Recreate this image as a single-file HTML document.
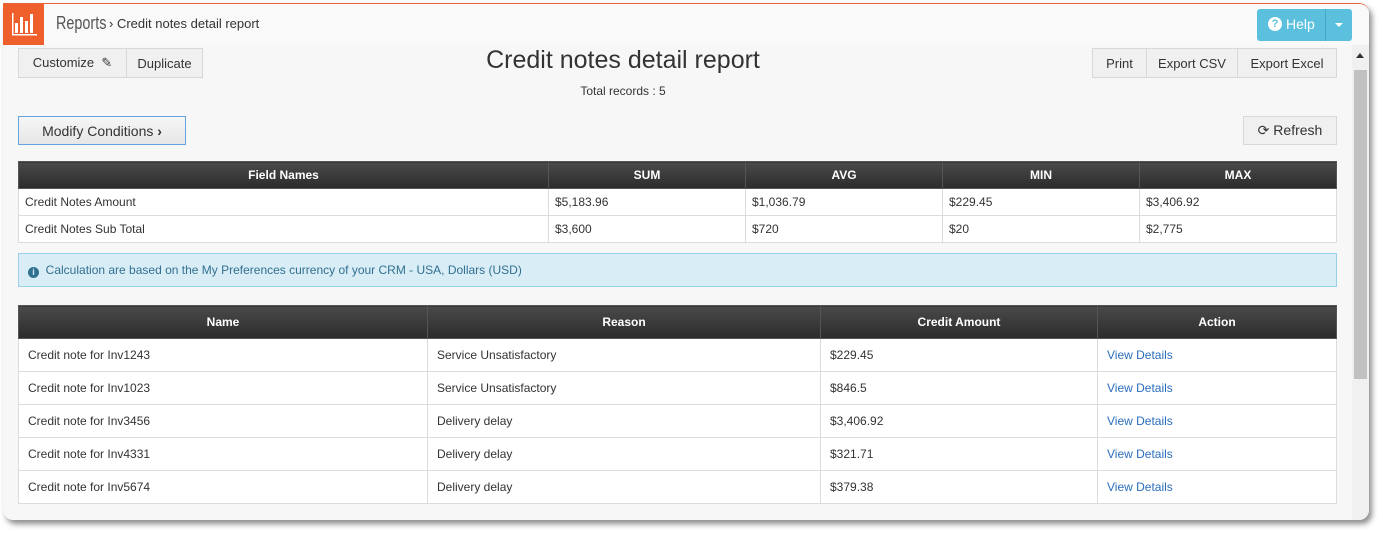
<!DOCTYPE html>
<html><head><style>
*{box-sizing:border-box;margin:0;padding:0}
body{width:1383px;height:533px;background:#fff;font-family:"Liberation Sans","DejaVu Sans",sans-serif;color:#333;position:relative;overflow:hidden}
.win{position:absolute;left:3px;top:3px;width:1366px;height:517px;border-radius:0 10px 10px 10px;background:#f7f7f7;box-shadow:3px 4px 6px rgba(0,0,0,.45);overflow:hidden;border-top:1px solid #e8623a}
.hdr{position:absolute;left:0;top:0;width:100%;height:41px;background:#f9f9f9}
.logo{position:absolute;left:0;top:-1px;width:41px;height:42px;background:#ef5f2c}
.abs{position:absolute}
.btn{position:absolute;background:#f0f0f0;border:1px solid #d8d8d8;font-size:13px;color:#333;display:flex;align-items:center;justify-content:center}
table{position:absolute;border-collapse:collapse;font-size:12px;background:#fff}
th{background:linear-gradient(#4a4a4a,#2b2b2b);color:#fff;font-weight:bold;border:1px solid #555;text-align:center}
td{border:1px solid #dcdcdc;padding-left:6px}
a{color:#2a6ebb;text-decoration:none}
</style></head><body>
<div class="win">
 <div class="hdr">
  <div class="logo"><svg width="41" height="42" viewBox="0 0 41 42"><g fill="#fff"><rect x="12" y="20" width="3" height="10"/><rect x="17" y="14" width="3" height="16"/><rect x="22" y="18" width="3" height="12"/><rect x="27" y="11" width="3" height="19"/><rect x="9" y="10" width="1.5" height="22"/><rect x="9" y="31" width="25" height="1.5"/></g></svg></div>
  <div class="abs" style="left:53px;top:9px;font-size:18px;color:#555;transform:scaleX(.8);transform-origin:left">Reports</div>
  <div class="abs" style="left:106px;top:12px;font-size:13px;color:#333">› Credit notes detail report</div>
  <div class="abs" style="left:1254px;top:5px;width:95px;height:32px;background:#5bc0de;border-radius:3px;color:#fff;font-size:14px">
   <span style="position:absolute;left:11px;top:8px;width:14px;height:14px;border-radius:50%;background:#fff;color:#5bc0de;font-size:11px;font-weight:bold;text-align:center;line-height:14px">?</span>
   <span style="position:absolute;left:29px;top:7px">Help</span>
   <span style="position:absolute;left:68px;top:0;width:1px;height:32px;background:#46a8c6"></span>
   <span style="position:absolute;left:78px;top:14px;border-left:4px solid transparent;border-right:4px solid transparent;border-top:4px solid #fff"></span>
  </div>
 </div>
 <div class="btn" style="left:15px;top:44px;width:109px;height:30px">Customize&nbsp;&nbsp;✎</div>
 <div class="btn" style="left:123px;top:44px;width:77px;height:30px">Duplicate</div>
 <div class="abs" style="left:0;width:1240px;top:42px;text-align:center;font-size:25px;color:#333">Credit notes detail report</div>
 <div class="abs" style="left:0;width:1240px;top:80px;text-align:center;font-size:12px">Total records : 5</div>
 <div class="btn" style="left:1089px;top:44px;width:55px;height:30px">Print</div>
 <div class="btn" style="left:1143px;top:44px;width:92px;height:30px">Export CSV</div>
 <div class="btn" style="left:1234px;top:44px;width:100px;height:30px">Export Excel</div>
 <div class="btn" style="left:15px;top:112px;width:168px;height:29px;border-color:#66a3e0;font-size:14px;background:linear-gradient(#f6f6f6,#e6e6e6)">Modify Conditions&nbsp;<b>›</b></div>
 <div class="btn" style="left:1240px;top:112px;width:94px;height:29px;font-size:14px">⟳&nbsp;Refresh</div>
 <table style="left:15px;top:157px;width:1319px">
  <tr style="height:27px"><th style="width:530px">Field Names</th><th style="width:197px">SUM</th><th style="width:197px">AVG</th><th style="width:197px">MIN</th><th>MAX</th></tr>
  <tr style="height:27px"><td>Credit Notes Amount</td><td>$5,183.96</td><td>$1,036.79</td><td>$229.45</td><td>$3,406.92</td></tr>
  <tr style="height:27px"><td>Credit Notes Sub Total</td><td>$3,600</td><td>$720</td><td>$20</td><td>$2,775</td></tr>
 </table>
 <div class="abs" style="left:15px;top:249px;width:1319px;height:34px;background:#d9edf7;border:1px solid #9acfea;font-size:12px;color:#31708f;padding:9px 0 0 9px"><span style="display:inline-block;width:11px;height:11px;border-radius:50%;background:#31708f;color:#d9edf7;font-size:9px;font-weight:bold;text-align:center;line-height:11px;vertical-align:-1px">i</span>&nbsp; Calculation are based on the My Preferences currency of your CRM - USA, Dollars (USD)</div>
 <table style="left:15px;top:301px;width:1319px">
  <tr style="height:33px"><th style="width:409px">Name</th><th style="width:393px">Reason</th><th style="width:277px">Credit Amount</th><th>Action</th></tr>
  <tr style="height:33px"><td style="padding-left:9px">Credit note for Inv1243</td><td style="padding-left:9px">Service Unsatisfactory</td><td style="padding-left:9px">$229.45</td><td style="padding-left:9px"><a>View Details</a></td></tr>
  <tr style="height:33px"><td style="padding-left:9px">Credit note for Inv1023</td><td style="padding-left:9px">Service Unsatisfactory</td><td style="padding-left:9px">$846.5</td><td style="padding-left:9px"><a>View Details</a></td></tr>
  <tr style="height:33px"><td style="padding-left:9px">Credit note for Inv3456</td><td style="padding-left:9px">Delivery delay</td><td style="padding-left:9px">$3,406.92</td><td style="padding-left:9px"><a>View Details</a></td></tr>
  <tr style="height:33px"><td style="padding-left:9px">Credit note for Inv4331</td><td style="padding-left:9px">Delivery delay</td><td style="padding-left:9px">$321.71</td><td style="padding-left:9px"><a>View Details</a></td></tr>
  <tr style="height:33px"><td style="padding-left:9px">Credit note for Inv5674</td><td style="padding-left:9px">Delivery delay</td><td style="padding-left:9px">$379.38</td><td style="padding-left:9px"><a>View Details</a></td></tr>
 </table>
 <div class="abs" style="left:1349px;top:41px;width:17px;height:476px;background:#f0f0f0">
  <div class="abs" style="left:4px;top:8px;border-left:4px solid transparent;border-right:4px solid transparent;border-bottom:5px solid #333"></div>
  <div class="abs" style="left:2px;top:25px;width:13px;height:309px;background:#c1c1c1"></div>
 </div>
</div>
</body></html>
